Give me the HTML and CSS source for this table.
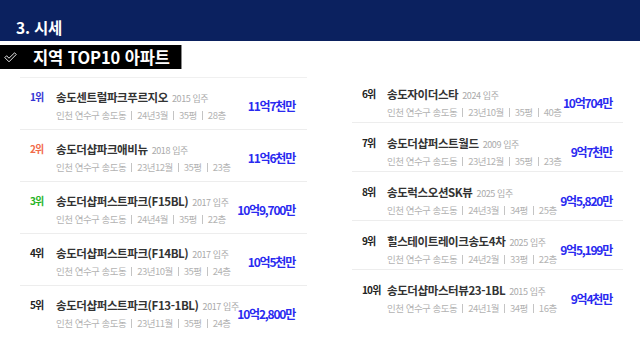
FILE: index.html
```html
<!DOCTYPE html>
<html lang="ko">
<head>
<meta charset="utf-8">
<link rel="stylesheet" href="styles.css">
</head>
<body>
<header class="top">
  <h1 class="title">3. 시세</h1>
</header>
<div class="label">
  <svg class="check" width="13" height="11" viewBox="0 0 13 11"><polygon points="0.8,5.6 2.6,3.8 5,6.2 10.6,0.8 12.2,2.5 5,9.8" fill="none" stroke="#fff" stroke-width="0.9" stroke-linejoin="round"/></svg>
  <span class="label-text">지역 TOP10 아파트</span>
</div>
<main class="lists">
  <section class="list list-left">
    <div class="row">
      <span class="rank r1">1위</span>
      <div class="info">
        <div class="name">송도센트럴파크푸르지오<span class="year">2015 입주</span></div>
        <div class="meta">인천 연수구 송도동<i class="sep"></i>24년3월<i class="sep"></i>35평<i class="sep"></i>28층</div>
      </div>
      <span class="price">11억7천만</span>
    </div>
    <div class="row">
      <span class="rank r2">2위</span>
      <div class="info">
        <div class="name">송도더샵파크애비뉴<span class="year">2018 입주</span></div>
        <div class="meta">인천 연수구 송도동<i class="sep"></i>23년12월<i class="sep"></i>35평<i class="sep"></i>23층</div>
      </div>
      <span class="price">11억6천만</span>
    </div>
    <div class="row">
      <span class="rank r3">3위</span>
      <div class="info">
        <div class="name">송도더샵퍼스트파크(F15BL)<span class="year">2017 입주</span></div>
        <div class="meta">인천 연수구 송도동<i class="sep"></i>24년4월<i class="sep"></i>35평<i class="sep"></i>22층</div>
      </div>
      <span class="price">10억9,700만</span>
    </div>
    <div class="row">
      <span class="rank">4위</span>
      <div class="info">
        <div class="name">송도더샵퍼스트파크(F14BL)<span class="year">2017 입주</span></div>
        <div class="meta">인천 연수구 송도동<i class="sep"></i>23년10월<i class="sep"></i>35평<i class="sep"></i>24층</div>
      </div>
      <span class="price">10억5천만</span>
    </div>
    <div class="row last">
      <span class="rank">5위</span>
      <div class="info">
        <div class="name">송도더샵퍼스트파크(F13-1BL)<span class="year">2017 입주</span></div>
        <div class="meta">인천 연수구 송도동<i class="sep"></i>23년11월<i class="sep"></i>35평<i class="sep"></i>24층</div>
      </div>
      <span class="price">10억2,800만</span>
    </div>
  </section>
  <section class="list list-right">
    <div class="row">
      <span class="rank">6위</span>
      <div class="info">
        <div class="name">송도자이더스타<span class="year">2024 입주</span></div>
        <div class="meta">인천 연수구 송도동<i class="sep"></i>23년10월<i class="sep"></i>35평<i class="sep"></i>40층</div>
      </div>
      <span class="price">10억704만</span>
    </div>
    <div class="row">
      <span class="rank">7위</span>
      <div class="info">
        <div class="name">송도더샵퍼스트월드<span class="year">2009 입주</span></div>
        <div class="meta">인천 연수구 송도동<i class="sep"></i>23년12월<i class="sep"></i>35평<i class="sep"></i>23층</div>
      </div>
      <span class="price">9억7천만</span>
    </div>
    <div class="row">
      <span class="rank">8위</span>
      <div class="info">
        <div class="name">송도럭스오션SK뷰<span class="year">2025 입주</span></div>
        <div class="meta">인천 연수구 송도동<i class="sep"></i>24년3월<i class="sep"></i>34평<i class="sep"></i>25층</div>
      </div>
      <span class="price">9억5,820만</span>
    </div>
    <div class="row">
      <span class="rank">9위</span>
      <div class="info">
        <div class="name">힐스테이트레이크송도4차<span class="year">2025 입주</span></div>
        <div class="meta">인천 연수구 송도동<i class="sep"></i>24년2월<i class="sep"></i>33평<i class="sep"></i>22층</div>
      </div>
      <span class="price">9억5,199만</span>
    </div>
    <div class="row last">
      <span class="rank">10위</span>
      <div class="info">
        <div class="name">송도더샵마스터뷰23-1BL<span class="year">2015 입주</span></div>
        <div class="meta">인천 연수구 송도동<i class="sep"></i>24년1월<i class="sep"></i>34평<i class="sep"></i>16층</div>
      </div>
      <span class="price">9억4천만</span>
    </div>
  </section>
</main>
</body>
</html>
```

FILE: styles.css
```css
* { box-sizing: border-box; }
html, body { margin: 0; padding: 0; }
body {
  width: 640px;
  height: 360px;
  overflow: hidden;
  background: #fff;
  font-family: "Noto Sans CJK KR", "Noto Sans", sans-serif;
  color: #333;
}
.top {
  height: 41px;
  background: #0b215f;
  display: flex;
  align-items: flex-end;
  padding: 0 0 4px 16px;
}
.title {
  margin: 0;
  color: #fff;
  font-size: 15.5px;
  font-weight: 700;
  line-height: 20px;
  letter-spacing: -0.2px;
}
.label {
  margin-top: 4px;
  width: 182px;
  height: 24px;
  background: #000;
  border-right: 1px solid #8a8a8a;
  display: flex;
  align-items: center;
  padding-left: 4px;
}
.check { display: block; margin-top: 1px; }
.label-text {
  margin-left: 16px;
  color: #fff;
  font-size: 16.5px;
  font-weight: 700;
  line-height: 20px;
  letter-spacing: -0.1px;
}
.lists {
  display: flex;
  align-items: flex-start;
  padding-left: 20px;
  margin-top: 5px;
  gap: 45px;
}
.list-left { width: 287px; margin-top: 3px; border-top: 1px solid #f0f0f0; }
.list-right { width: 271px; }
.row {
  display: grid;
  grid-template-columns: 26px minmax(0, 1fr) auto;
  align-items: center;
  border-bottom: 1px solid #ededed;
  padding: 11px 12px 8px 10px;
  height: 52px;
}
.list-right .row {
  grid-template-columns: 25px minmax(0, 1fr) auto;
  height: 49px;
  padding: 12px 11px 5px 10px;
}
.row.last { border-bottom: none; }
.rank {
  align-self: start;
  font-size: 10px;
  font-weight: 700;
  line-height: 16px;
  letter-spacing: -0.8px;
  color: #222;
}
.r1 { color: #3535d4; }
.r2 { color: #f26a4b; }
.r3 { color: #27b327; }
.info { white-space: nowrap; min-width: 0; }
.name {
  font-size: 11.5px;
  font-weight: 700;
  line-height: 16px;
  letter-spacing: -0.4px;
  color: #333;
}
.year {
  margin-left: 4px;
  font-size: 9px;
  font-weight: 400;
  letter-spacing: -0.4px;
  color: #aaa;
}
.meta {
  font-size: 9.5px;
  line-height: 16px;
  letter-spacing: -0.5px;
  color: #b3b3b3;
  display: flex;
  align-items: center;
}
.sep {
  display: inline-block;
  width: 1px;
  height: 9px;
  background: #c4c4c4;
  margin: 0 5px;
}
.price {
  font-size: 12px;
  font-weight: 700;
  line-height: 16px;
  letter-spacing: -1.2px;
  color: #2a2af0;
  text-align: right;
}
```
